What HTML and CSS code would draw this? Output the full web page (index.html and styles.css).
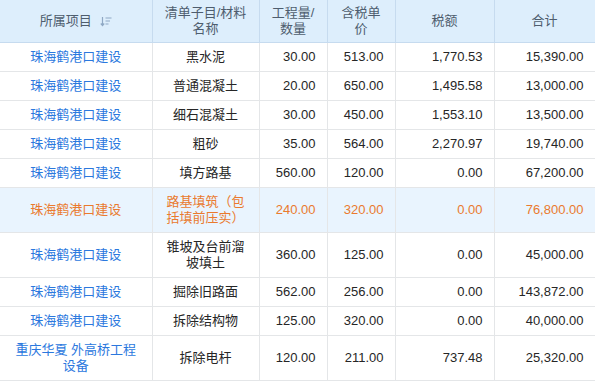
FILE: index.html
```html
<!DOCTYPE html>
<html lang="zh-CN">
	<head>
		<meta charset="UTF-8" />
		<title>材料清单</title>
		<link rel="stylesheet" href="styles.css">
	</head>
	<body>
		<table class="grid">
			<colgroup>
				<col class="c-project" />
				<col class="c-name" />
				<col class="c-qty" />
				<col class="c-price" />
				<col class="c-tax" />
				<col class="c-total" />
			</colgroup>
			<thead>
				<tr>
					<th>
						<span class="sort-head">所属项目
							<svg class="sort-icon" width="12" height="11" viewBox="0 0 12 11">
								<path d="M2.5 1v8.5M0.8 7.5l1.7 2 1.7-2" fill="none" stroke="#8fa8c4" stroke-width="1.2"/>
								<path d="M5.5 2h6M5.5 5h4.5M5.5 8h3" fill="none" stroke="#8fa8c4" stroke-width="1.2"/>
							</svg>
						</span>
					</th>
					<th>清单子目/材料<br>名称</th>
					<th>工程量/<br>数量</th>
					<th>含税单<br>价</th>
					<th>税额</th>
					<th>合计</th>
				</tr>
			</thead>
			<tbody id="rows"></tbody>
		</table>

		<script>
			const rows = [
				["珠海鹤港口建设", "黑水泥", "30.00", "513.00", "1,770.53", "15,390.00"],
				["珠海鹤港口建设", "普通混凝土", "20.00", "650.00", "1,495.58", "13,000.00"],
				["珠海鹤港口建设", "细石混凝土", "30.00", "450.00", "1,553.10", "13,500.00"],
				["珠海鹤港口建设", "粗砂", "35.00", "564.00", "2,270.97", "19,740.00"],
				["珠海鹤港口建设", "填方路基", "560.00", "120.00", "0.00", "67,200.00"],
				["珠海鹤港口建设", "路基填筑（包括填前压实）", "240.00", "320.00", "0.00", "76,800.00", true],
				["珠海鹤港口建设", "锥坡及台前溜坡填土", "360.00", "125.00", "0.00", "45,000.00"],
				["珠海鹤港口建设", "掘除旧路面", "562.00", "256.00", "0.00", "143,872.00"],
				["珠海鹤港口建设", "拆除结构物", "125.00", "320.00", "0.00", "40,000.00"],
				["重庆华夏 外高桥工程设备", "拆除电杆", "120.00", "211.00", "737.48", "25,320.00"]
			];

			const body = document.getElementById("rows");

			rows.forEach((r) => {
				const tr = document.createElement("tr");
				if (r[6]) tr.classList.add("active");
				r.slice(0, 6).forEach((val, i) => {
					const td = document.createElement("td");
					td.textContent = val;
					if (i === 0) td.classList.add("project");
					else if (i === 1) td.classList.add("name");
					else td.classList.add("num");
					tr.appendChild(td);
				});
				body.appendChild(tr);
			});
		</script>
	</body>
</html>
```

FILE: styles.css
```css
body {
	margin: 0;
	background-color: #ffffff;
	font-family: "Liberation Sans", "Noto Sans CJK SC", sans-serif;
	font-size: 13px;
	color: #262626;
}

.grid {
	width: 595px;
	table-layout: fixed;
	border-collapse: collapse;
}

.c-project { width: 152px; }
.c-name { width: 107px; }
.c-qty { width: 68px; }
.c-price { width: 68px; }
.c-tax { width: 99px; }
.c-total { width: 101px; }

.grid th {
	height: 42px;
	padding: 0 4px;
	background-color: #ddeefc;
	border: 1px solid #c6dbef;
	border-top: none;
	color: #4e5d6e;
	font-weight: normal;
	line-height: 16px;
	text-align: center;
}

.grid th:first-child,
.grid td:first-child {
	border-left: none;
}

.sort-head {
	display: inline-flex;
	align-items: center;
	gap: 8px;
}

.sort-icon {
	display: block;
}

.grid td {
	padding: 6px 4px;
	line-height: 16px;
	border: 1px solid #e4e6e8;
	text-align: center;
}

.grid td.project {
	color: #2b78de;
	padding: 6px 10px;
}

.grid td.name {
	padding: 6px 12px;
}

.grid td.num {
	text-align: right;
	padding-right: 11px;
}

.grid tr.active td {
	background-color: #e9f4fe;
	color: #ea7a2e;
}
```
